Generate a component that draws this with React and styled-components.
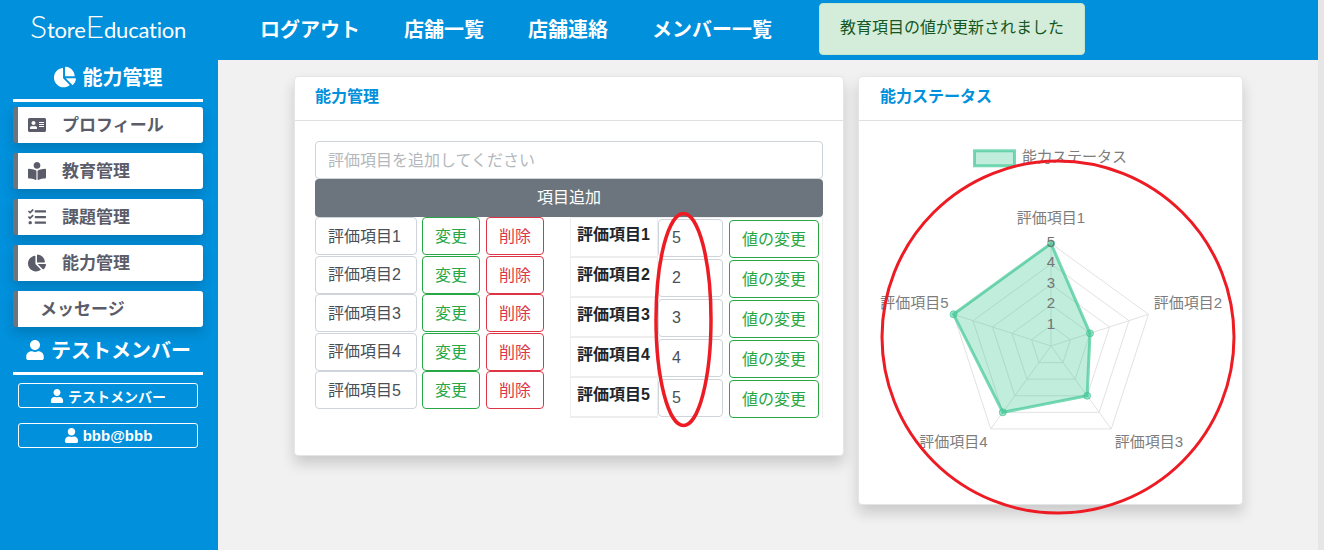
import React from "react";
import styled, { createGlobalStyle } from "styled-components";
import { FaChartPie, FaAddressCard, FaBookReader, FaTasks, FaUser } from "react-icons/fa";

const JP = `"Liberation Sans", "Noto Sans CJK JP", sans-serif`;

const GlobalStyle = createGlobalStyle`
  html, body {
    margin: 0;
    height: 100%;
    overflow: hidden;
    background: #f1f1f1;
    font-family: ${JP};
  }
  * { box-sizing: border-box; }
`;

const Page = styled.div`
  position: relative;
  display: flex;
  width: 1324px;
  height: 550px;
  overflow: hidden;
`;

const Content = styled.div`
  width: 1318px;
`;

const ScrollTrack = styled.div`
  width: 6px;
  background: #e6e6e6;
`;

const Header = styled.header`
  display: flex;
  align-items: flex-start;
  height: 60px;
  background: #0090dc;
  color: #fff;
`;

const Logo = styled.div`
  width: 218px;
  padding: 10px 0 0 30px;
  font-family: Lato, sans-serif;
  font-weight: 400;
  font-size: 22px;
  letter-spacing: -0.2px;
  line-height: 32px;
  white-space: nowrap;
  span { font-size: 32px; font-weight: 300; }
`;

const NavList = styled.nav`
  display: flex;
  gap: 44px;
  padding: 15px 0 0 42px;
  width: 601px;
`;

const NavItem = styled.a`
  font-size: 20px;
  font-weight: 700;
  line-height: 30px;
  white-space: nowrap;
`;

const Toast = styled.div`
  margin-top: 3px;
  width: 266px;
  height: 52px;
  background: #d4edda;
  border: 1px solid #c3e6cb;
  border-radius: 4px;
  color: #155724;
  font-size: 16px;
  line-height: 47px;
  text-align: center;
  white-space: nowrap;
`;

const Body = styled.div`
  display: flex;
  height: 490px;
`;

const Sidebar = styled.aside`
  width: 218px;
  padding: 0 15px 0 13px;
  background: #0090dc;
  color: #fff;
`;

const SideTitle = styled.div`
  display: flex;
  align-items: center;
  justify-content: center;
  gap: ${p => p.$gap}px;
  height: ${p => p.$h}px;
  padding-bottom: ${p => p.$pb}px;
  border-bottom: 3px solid #fff;
  margin-bottom: ${p => p.$mb}px;
  font-size: 20px;
  font-weight: 700;
  white-space: nowrap;
  svg { font-size: ${p => p.$icon}px; }
`;

const SideMenu = styled.div`
  display: flex;
  flex-direction: column;
  gap: 10px;
`;

const MenuItem = styled.a`
  display: flex;
  align-items: center;
  height: 36px;
  padding: 0 0 4px 10px;
  background: #fff;
  border-left: 5px solid #6c757d;
  border-radius: 3px;
  box-shadow: 0 6px 12px rgba(0, 0, 0, 0.16);
  color: #5a5c69;
  font-size: 17px;
  font-weight: 700;
  white-space: nowrap;
`;

const MenuIcon = styled.span`
  display: flex;
  width: 34px;
  padding-top: 4px;
  font-size: 18px;
`;

const MessageLabel = styled.span`
  padding-left: 12px;
`;

const UserBadge = styled.div`
  display: flex;
  align-items: center;
  justify-content: center;
  gap: 4px;
  height: 25px;
  margin: 0 0 ${p => p.$mb || 0}px 5px;
  width: 180px;
  border: 1px solid #fff;
  border-radius: 3px;
  font-size: ${p => p.$fs}px;
  font-weight: 700;
  white-space: nowrap;
`;

const Main = styled.main`
  display: flex;
  align-items: flex-start;
  gap: 14px;
  padding: 16px 0 0 76px;
  flex: 1;
`;

const Card = styled.section`
  width: ${p => p.$w}px;
  height: ${p => p.$h}px;
  background: #fff;
  border: 1px solid #e4e5e7;
  border-radius: 4px;
  box-shadow: 0 8px 14px rgba(0, 0, 0, 0.16);
`;

const CardHeader = styled.h2`
  margin: 0;
  height: 44px;
  padding-left: ${p => p.$pad}px;
  border-bottom: 1px solid #dfe0e2;
  color: #0090dc;
  font-size: 16px;
  font-weight: 700;
  line-height: 39px;
`;

const CardBody = styled.div`
  padding: 20px 20px 0;
`;

const TextField = styled.div`
  display: flex;
  align-items: center;
  width: ${p => p.$w || "100%"};
  height: ${p => p.$h}px;
  padding: ${p => p.$num ? "0 0 0 13px" : "0 0 3px 12px"};
  background: #fff;
  border: 1px solid #ced4da;
  border-radius: 4px;
  color: ${p => p.$muted ? "#b4b8bc" : "#495057"};
  font-size: 16px;
  white-space: nowrap;
`;

const AddButton = styled.div`
  height: 38px;
  background: #6c757d;
  border-radius: 4px;
  color: #fff;
  font-size: 16px;
  line-height: 38px;
  text-align: center;
`;

const Columns = styled.div`
  display: flex;
`;

const ItemList = styled.div`
  width: 255px;
`;

const ItemRow = styled.div`
  display: flex;
  gap: 5px;
  height: 38.5px;
`;

const OutlineButton = styled.div`
  width: ${p => p.$w}px;
  height: 38px;
  margin-left: ${p => p.$ml || 0}px;
  border: 1px solid ${p => p.$color};
  border-radius: 4px;
  color: ${p => p.$color};
  font-size: 16px;
  line-height: 37px;
  text-align: center;
  white-space: nowrap;
`;

const ValueTable = styled.div`
  display: grid;
  grid-template-columns: 86px 66px 99px;
  grid-auto-rows: 40px;
  height: 201px;
  width: 253px;
  border: 1px solid #eee;
  background: #eee;
`;

const RowHead = styled.div`
  padding: 3px 0 0 6px;
  background: #fff;
  border-bottom: 2px solid #eee;
  color: #212529;
  font-size: 16px;
  font-weight: 700;
  white-space: nowrap;
`;

const ValueCell = styled.div`
  display: flex;
  padding-top: 1px;
  background: #fff;
  border-left: 1px solid #eee;
`;

const ActionCell = styled.div`
  background: #fff;
  padding: 2px 0 0 6px;
`;

const Chart = styled.svg`
  display: block;
  font-family: ${JP};
`;

const Annotations = styled.svg`
  position: absolute;
  inset: 0;
  pointer-events: none;
`;

const items = ["評価項目1", "評価項目2", "評価項目3", "評価項目4", "評価項目5"];
const values = [5, 2, 3, 4, 5];

// chart coordinates start at the card's inner left edge, x 859 on the page
const CX = 192;
const CY = 225;
const R = 102.5;

const point = (i, v) => {
  const a = (Math.PI * 2 * i) / 5;
  const r = (R * v) / 5;
  return [CX + r * Math.sin(a), CY - r * Math.cos(a)];
};
const ring = v => [0, 1, 2, 3, 4].map(i => point(i, v).join(",")).join(" ");

const labelSpots = [
  [192, 101.5],
  [329, 186.5],
  [290, 325.5],
  [94.5, 325.5],
  [55.5, 186.5],
];

const AREA = "rgba(64,200,150,0.33)";
const LINE = "rgba(64,200,150,0.7)";

const RadarChart = () => (
  <Chart width="383" height="382" viewBox="0 0 383 382">
    <rect x="115.5" y="29.8" width="40" height="15" fill={AREA} stroke={LINE} strokeWidth="3" />
    <text x="163" y="41" fontSize="15" fill="#7d7d7d">能力ステータス</text>
    {[1, 2, 3, 4, 5].map(v => (
      <polygon key={v} points={ring(v)} fill="none" stroke="#e2e2e2" strokeWidth="1" />
    ))}
    {[0, 1, 2, 3, 4].map(i => {
      const [x, y] = point(i, 5);
      return <line key={i} x1={CX} y1={CY} x2={x} y2={y} stroke="#e2e2e2" strokeWidth="1" />;
    })}
    <polygon
      points={values.map((v, i) => point(i, v).join(",")).join(" ")}
      fill={AREA}
      stroke={LINE}
      strokeWidth="3"
    />
    {values.map((v, i) => {
      const [x, y] = point(i, v);
      return <circle key={i} cx={x} cy={y} r="3.5" fill="rgba(64,200,150,0.5)" stroke={LINE} />;
    })}
    {[1, 2, 3, 4, 5].map(v => (
      <text key={v} x={CX} y={CY - (R * v) / 5 + 3} fontSize="15" textAnchor="middle" fill="#747474">{v}</text>
    ))}
    {items.map((label, i) => (
      <text key={label} x={labelSpots[i][0]} y={labelSpots[i][1]} fontSize="15" textAnchor="middle" fill="#7d7d7d">{label}</text>
    ))}
  </Chart>
);

const App = () => (
  <Page>
    <GlobalStyle />
    <Content>
      <Header>
        <Logo><span>S</span>tore<span>E</span>ducation</Logo>
        <NavList>
          <NavItem>ログアウト</NavItem>
          <NavItem>店舗一覧</NavItem>
          <NavItem>店舗連絡</NavItem>
          <NavItem>メンバー一覧</NavItem>
        </NavList>
        <Toast>教育項目の値が更新されました</Toast>
      </Header>
      <Body>
        <Sidebar>
          <SideTitle $h={42} $pb={6} $gap={7} $mb={5} $icon={22}><FaChartPie />能力管理</SideTitle>
          <SideMenu>
            <MenuItem><MenuIcon><FaAddressCard /></MenuIcon>プロフィール</MenuItem>
            <MenuItem><MenuIcon><FaBookReader /></MenuIcon>教育管理</MenuItem>
            <MenuItem><MenuIcon><FaTasks /></MenuIcon>課題管理</MenuItem>
            <MenuItem><MenuIcon><FaChartPie /></MenuIcon>能力管理</MenuItem>
            <MenuItem><MessageLabel>メッセージ</MessageLabel></MenuItem>
          </SideMenu>
          <SideTitle $h={48} $pb={0} $gap={6} $mb={8} $icon={20}><FaUser />テストメンバー</SideTitle>
          <UserBadge $mb={15} $fs={14}><FaUser />テストメンバー</UserBadge>
          <UserBadge $fs={15}><FaUser />bbb@bbb</UserBadge>
        </Sidebar>
        <Main>
          <Card $w={550} $h={380}>
            <CardHeader $pad={20}>能力管理</CardHeader>
            <CardBody>
              <TextField $h={38} $muted>評価項目を追加してください</TextField>
              <AddButton>項目追加</AddButton>
              <Columns>
                <ItemList>
                  {items.map(label => (
                    <ItemRow key={label}>
                      <TextField $w="102px" $h={38}>{label}</TextField>
                      <OutlineButton $w={58} $color="#28a745">変更</OutlineButton>
                      <OutlineButton $w={58} $ml={1} $color="#dc3545">削除</OutlineButton>
                    </ItemRow>
                  ))}
                </ItemList>
                <ValueTable>
                  {items.map((label, i) => (
                    <React.Fragment key={label}>
                      <RowHead>{label}</RowHead>
                      <ValueCell><TextField $w="65px" $h={38} $num>{values[i]}</TextField></ValueCell>
                      <ActionCell><OutlineButton $w={90} $color="#28a745">値の変更</OutlineButton></ActionCell>
                    </React.Fragment>
                  ))}
                </ValueTable>
              </Columns>
            </CardBody>
          </Card>
          <Card $w={385} $h={429}>
            <CardHeader $pad={21}>能力ステータス</CardHeader>
            <RadarChart />
          </Card>
        </Main>
      </Body>
    </Content>
    <ScrollTrack />
    <Annotations width="1324" height="550" viewBox="0 0 1324 550">
      <ellipse cx="683.5" cy="319.5" rx="27.5" ry="106" fill="none" stroke="#ed1c24" strokeWidth="3.5" />
      <ellipse cx="1058" cy="337" rx="176" ry="176" fill="none" stroke="#ed1c24" strokeWidth="3" />
    </Annotations>
  </Page>
);

export default App;
